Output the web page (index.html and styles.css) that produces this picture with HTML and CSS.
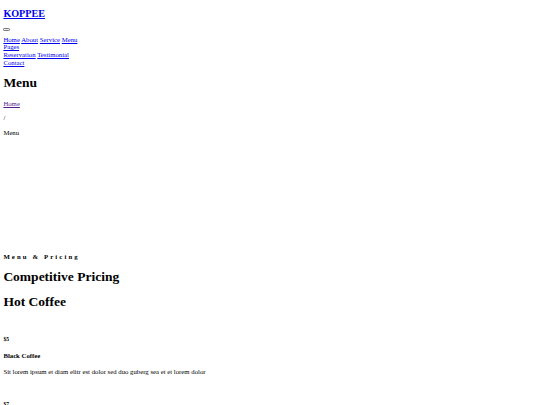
FILE: index.html
```html
<!DOCTYPE html>
<html lang="en">
<head>
<meta charset="utf-8">
<title>KOPPEE - Menu</title>
<link rel="stylesheet" href="styles.css">
</head>
<body class="page">
<nav class="nav-bar">
  <h1 class="brand-title"><a href="#" class="brand">KOPPEE</a></h1>
  <div class="toggler-line"><button type="button" class="toggler"></button></div>
  <div class="nav-links">
    <a href="#" class="nav-link">Home</a> <a href="#" class="nav-link">About</a> <a href="#" class="nav-link">Service</a> <a href="#" class="nav-link">Menu</a>
    <div class="dropdown">
      <a href="#" class="nav-link">Pages</a>
      <div class="dropdown-menu"><a href="#" class="nav-link">Reservation</a> <a href="#" class="nav-link">Testimonial</a></div>
    </div>
    <a href="#" class="nav-link">Contact</a>
  </div>
</nav>

<header class="page-header">
  <h1 class="page-title">Menu</h1>
  <div class="breadcrumb">
    <p class="crumb"><a href="#" class="crumb-link">Home</a></p>
    <p class="crumb">/</p>
    <p class="crumb">Menu</p>
  </div>
</header>

<div class="hero-space"></div>

<section class="menu">
  <h4 class="kicker">Menu &amp; Pricing</h4>
  <h1 class="section-title">Competitive Pricing</h1>
  <h1 class="group-title">Hot Coffee</h1>

  <div class="item">
    <div class="item-thumb"></div>
    <h5 class="price">$5</h5>
    <h4 class="item-name">Black Coffee</h4>
    <p class="item-desc">Sit lorem ipsum et diam elitr est dolor sed duo guberg sea et et lorem dolor</p>
  </div>

  <div class="item">
    <div class="item-thumb"></div>
    <h5 class="price">$7</h5>
    <h4 class="item-name">Chocolete Coffee</h4>
    <p class="item-desc">Sit lorem ipsum et diam elitr est dolor sed duo guberg sea et et lorem dolor</p>
  </div>
</section>
</body>
</html>
```

FILE: styles.css
```css
html {
  background: #ffffff;
}

.page {
  margin: 0 3.375px 3.375px;
  font-family: "Liberation Serif", "Times New Roman", serif;
  font-size: 6.75px;
  line-height: 7.6px;
  color: #000000;
  background: #ffffff;
}

a {
  color: #0000ee;
  text-decoration: underline;
}

.brand-title {
  font-size: 10.125px;
  line-height: 11.4px;
  font-weight: bold;
  margin: 8.4px 0;
}

.toggler-line {
  height: 7.6px;
}

.toggler {
  display: block;
  width: 6.75px;
  height: 2.4px;
  padding: 0;
  margin: 0;
  margin-top: 5.2px;
  background: #efefef;
  border: 0.8px solid #767676;
  border-radius: 1.2px;
  box-sizing: border-box;
}

.dropdown-menu {
  display: block;
}

.page-title {
  font-size: 13.5px;
  line-height: 15.6px;
  font-weight: bold;
  margin: 9.05px 0;
}

.crumb {
  margin: 6.75px 0;
}

.crumb-link {
  color: #551a8b;
}

.hero-space {
  height: 101px;
}

.kicker {
  font-size: 6.75px;
  font-weight: bold;
  letter-spacing: 2.11px;
  margin: 8.98px 0;
}

.section-title,
.group-title {
  font-size: 13.5px;
  line-height: 15.6px;
  font-weight: bold;
  margin: 9.05px 0;
}

.item-thumb {
  height: 7.6px;
}

.price {
  font-size: 5.6px;
  line-height: 6.75px;
  font-weight: bold;
  margin: 9.36px 0;
}

.item-name {
  font-size: 6.75px;
  font-weight: bold;
  margin: 8.98px 0;
}

.item-desc {
  margin: 0 0 8.25px;
}
```
